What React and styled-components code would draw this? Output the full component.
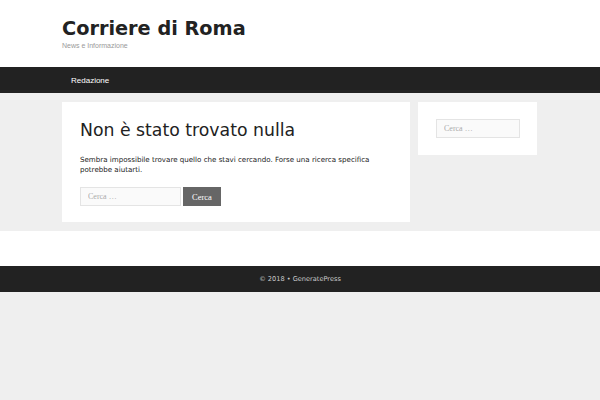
import React from 'react'
import styled, { createGlobalStyle } from 'styled-components'

const GlobalStyle = createGlobalStyle`
  html, body {
    margin: 0;
    padding: 0;
    background-color: #efefef;
    font-family: 'DejaVu Sans', sans-serif;
    color: #222;
  }
`;

const Header = styled.header`
  background-color: #fff;
  height: 67px;
  box-sizing: border-box;
  padding: 16px 0 0 62px;
`;

const SiteTitle = styled.h1`
  margin: 0;
  font-size: 19.3px;
  font-weight: bold;
  line-height: 25px;
  color: #222;
`;

const Tagline = styled.p`
  margin: 0;
  font-family: 'Liberation Sans', sans-serif;
  font-size: 7px;
  line-height: 9px;
  color: #999;
`;

const Nav = styled.nav`
  background-color: #222;
  height: 26px;
  display: flex;
  align-items: center;
  padding-left: 71px;
`;

const NavLink = styled.a`
  font-family: 'Liberation Sans', sans-serif;
  font-size: 8px;
  color: #fff;
  text-decoration: none;
`;

const Content = styled.div`
  display: flex;
  gap: 8px;
  align-items: flex-start;
  padding: 9px 0 9px 62px;
`;

const Card = styled.section`
  background-color: #fff;
  box-sizing: border-box;
  width: ${p => p.$width}px;
  height: ${p => p.$height}px;
  padding: ${p => p.$padding};
`;

const Heading = styled.h2`
  margin: 0 0 13px;
  font-size: 17.3px;
  font-weight: normal;
  line-height: 24px;
  color: #222;
`;

const Text = styled.p`
  margin: 0 0 12px;
  font-size: 7.1px;
  line-height: 10px;
  color: #1a1a1a;
`;

const SearchForm = styled.form`
  display: flex;
  gap: 2px;
`;

const SearchInput = styled.input`
  display: block;
  box-sizing: border-box;
  width: ${p => p.$width}px;
  height: 19px;
  border: 1px solid #e4e4e4;
  background-color: #fafafa;
  padding: 0 7px;
  font-family: 'Liberation Serif', serif;
  font-size: 8px;
  outline: none;
  &::placeholder {
    color: #aaa;
  }
`;

const SearchButton = styled.button`
  box-sizing: border-box;
  width: 38px;
  height: 19px;
  border: none;
  background-color: #666;
  color: #fff;
  font-family: 'Liberation Serif', serif;
  font-size: 8.5px;
  padding: 0;
`;

const FooterWidgets = styled.div`
  background-color: #fff;
  height: 35px;
`;

const Footer = styled.footer`
  background-color: #222;
  height: 26px;
  display: flex;
  align-items: center;
  justify-content: center;
  font-family: 'DejaVu Sans', sans-serif;
  font-size: 6.6px;
  color: #ccc;
`;

export default function App() {
  return (
    <>
      <GlobalStyle />
      <Header>
        <SiteTitle>Corriere di Roma</SiteTitle>
        <Tagline>News e Informazione</Tagline>
      </Header>
      <Nav>
        <NavLink href="#">Redazione</NavLink>
      </Nav>
      <Content>
        <Card $width={348} $height={120} $padding="16px 18px">
          <Heading>Non è stato trovato nulla</Heading>
          <Text>
            Sembra impossibile trovare quello che stavi cercando. Forse una ricerca specifica
            potrebbe aiutarti.
          </Text>
          <SearchForm onSubmit={e => e.preventDefault()}>
            <SearchInput $width={101} placeholder="Cerca …" />
            <SearchButton>Cerca</SearchButton>
          </SearchForm>
        </Card>
        <Card $width={119} $height={53} $padding="17px 18px">
          <SearchInput $width={84} placeholder="Cerca …" />
        </Card>
      </Content>
      <FooterWidgets />
      <Footer>© 2018 • GeneratePress</Footer>
    </>
  )
}
